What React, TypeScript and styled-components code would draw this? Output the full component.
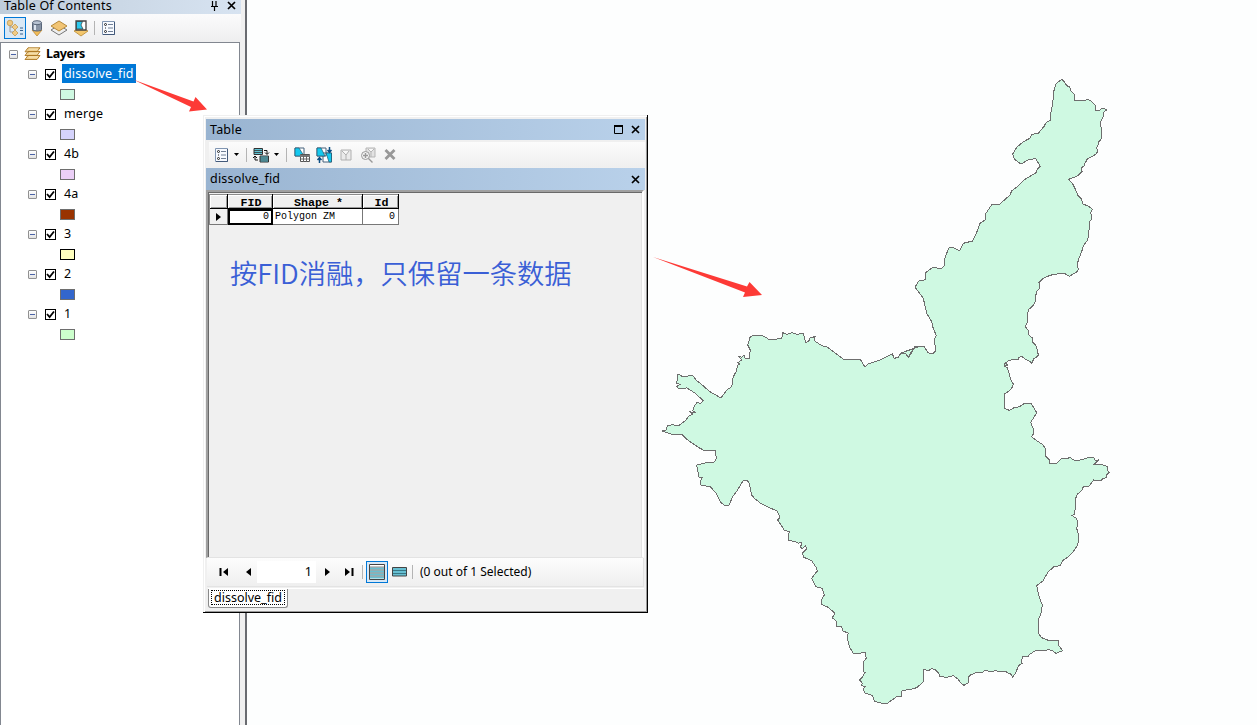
import React from 'react';
import styled, { createGlobalStyle } from 'styled-components';

const Global = createGlobalStyle`
  *, *::before, *::after { box-sizing: border-box; }
  body { margin: 0; background: #fdfefe; overflow: hidden; }
`;

const Desktop = styled.div`
  position: relative;
  display: flex;
  width: 1257px;
  height: 725px;
  overflow: hidden;
  background: #fdfefe;
  color: #000;
  font: 12.5px/20px "Noto Sans", "Noto Sans CJK SC", sans-serif;
`;

/* ---------- Table of contents ---------- */
const Toc = styled.aside`
  display: flex;
  flex-direction: column;
  width: 247px;
  height: 725px;
  background: #f0f0f0;
  border-right: 2px solid #696b70;
`;
const TocTitle = styled.header`
  display: flex;
  align-items: center;
  height: 14px;
  width: 241px;
  padding: 0 5px 3px 4px;
  background: linear-gradient(90deg, #bfcddb, #d7e3f1);
  line-height: 12px;
`;
const TocName = styled.span`
  flex: 1;
  letter-spacing: 0.2px;
  white-space: nowrap;
`;
const TitleIcons = styled.span`
  display: flex;
  align-items: center;
  gap: 8px;
`;
const TocTools = styled.div`
  display: flex;
  align-items: center;
  height: 28px;
  width: 241px;
  padding-left: 4px;
  background: linear-gradient(#fbfbfc, #eeeeef);
`;
const ToolSlot = styled.span<{ $on?: boolean; $w?: number }>`
  display: flex;
  align-items: center;
  justify-content: center;
  width: ${p => p.$w ?? 22}px;
  height: 22px;
  border: 1px solid ${p => (p.$on ? '#0078d7' : 'transparent')};
  background: ${p => (p.$on ? '#d9e8f5' : 'transparent')};
`;
const Divider = styled.span<{ $m?: string }>`
  width: 1px;
  height: 14px;
  margin: ${p => p.$m ?? '0 4px'};
  background: #b4b4b4;
`;
const Tree = styled.div`
  flex: 1;
  width: 240px;
  border: solid #828790;
  border-width: 1px 1px 0 1px;
  background: #fff;
  padding-top: 1px;
`;
const TreeRow = styled.div<{ $indent: number }>`
  display: flex;
  align-items: center;
  height: 20px;
  padding-left: ${p => p.$indent}px;
`;
const Expander = styled.span`
  display: flex;
  align-items: center;
  justify-content: center;
  width: 9px;
  height: 9px;
  border: 1px solid #919191;
  border-radius: 1px;
  background: linear-gradient(#fff, #e2e2e2);
  &::after { content: ''; width: 5px; height: 1px; background: #4b63a7; }
`;
const Check = styled.span`
  display: flex;
  width: 11px;
  height: 11px;
  margin: 1px 6px 0 8px;
  border: 1px solid #000;
`;
const Label = styled.span<{ $selected?: boolean }>`
  height: 19px;
  margin-top: -2px;
  padding: 0 2px;
  line-height: 19px;
  letter-spacing: 0.15px;
  color: ${p => (p.$selected ? '#fff' : '#000')};
  background: ${p => (p.$selected ? '#0078d7' : 'transparent')};
`;
const RootLabel = styled.b`
  margin-left: 5px;
  font-size: 12.5px;
  letter-spacing: -0.35px;
`;
const Swatch = styled.span<{ $fill: string; $line?: string }>`
  width: 15px;
  height: 11px;
  margin-top: 1px;
  border: 1px solid ${p => p.$line ?? '#6e6e6e'};
  background: ${p => p.$fill};
`;

/* ---------- Floating table window ---------- */
const Window = styled.section`
  position: absolute;
  left: 203px;
  top: 115px;
  display: flex;
  flex-direction: column;
  width: 445px;
  height: 498px;
  padding: 2px 1px 0 2px;
  border: solid #000;
  border-width: 0 1px 1px 0;
  background: #f0f0f0;
  box-shadow: inset 1px 1px #f0f0f0, inset 2px 2px #fff, inset -1px -1px #9a9a9a;
`;
const Bar = styled.header<{ $h: number; $mt?: number }>`
  display: flex;
  align-items: center;
  height: ${p => p.$h}px;
  margin: ${p => p.$mt ?? 0}px 1px 0 1px;
  padding: 0 5px 0 4px;
  background: linear-gradient(90deg, #99b4d1, #b9d1ea);
`;
const BarName = styled.span`
  flex: 1;
  letter-spacing: 0.2px;
`;
const TableTools = styled.div`
  display: flex;
  align-items: center;
  height: 25px;
  margin: 2px 1px 1px 4px;
  padding-left: 4px;
  background: linear-gradient(#fcfcfc, #efefef);
`;
const Grid = styled.div`
  height: 368px;
  margin: 0 2px 0 1px;
  padding: 2px 0 0 1px;
  border: solid;
  border-width: 2px 2px 1px 2px;
  border-color: #a0a0a0 #fff #e3e3e3 #a0a0a0;
  box-shadow: inset 1px 1px #696969, inset -1px 0 #e3e3e3;
  background: #f0f0f0;
`;
const Sheet = styled.div`
  display: grid;
  grid-template-columns: 18px 45px 90px 36px;
  grid-template-rows: 15px 16px;
  width: 190px;
  border-left: 1px solid #8a8a8a;
  font-family: "Liberation Mono", "Noto Sans CJK SC", monospace;
`;
const HeadCell = styled.div`
  display: flex;
  align-items: center;
  justify-content: center;
  padding: 3px 0 0 2px;
  border: solid #000;
  border-width: 0 1px 1px 0;
  box-shadow: inset 0 1px #8a8a8a, inset 1px 2px #fff, inset -1px -1px #9a9a9a;
  background: #f0f0f0;
  font-weight: 700;
  font-size: 11.67px;
  line-height: 12px;
`;
const Cell = styled.div<{ $right?: boolean; $active?: boolean; $head?: boolean }>`
  display: flex;
  align-items: center;
  justify-content: ${p => (p.$head ? 'center' : p.$right ? 'flex-end' : 'flex-start')};
  padding: ${p => (p.$active ? '0 2px 0 0' : '0 3px 0 2px')};
  border: solid #777;
  border-width: 0 1px 1px 0;
  ${p => p.$active && 'border: 2px solid #000;'}
  background: ${p => (p.$head ? '#f0f0f0' : '#fff')};
  font-size: 10px;
  line-height: 12px;
`;
const Note = styled.p`
  margin: 27px 0 0 21px;
  font: 27.3px/40px "Noto Sans CJK SC", sans-serif;
  color: #3a5fd6;
  white-space: nowrap;
  font-weight: 350;
`;
const Nav = styled.footer`
  display: flex;
  align-items: center;
  height: 29px;
  margin: 0 2px 0 2px;
  border-right: 1px solid #e3e3e3;
  border-bottom: 1px solid #e3e3e3;
  background: linear-gradient(#fdfdfd, #efefef);
`;
const NavButton = styled.span<{ $w: number }>`
  display: flex;
  justify-content: center;
  width: ${p => p.$w}px;
`;
const RecordBox = styled.span`
  width: 59px;
  height: 22px;
  padding-right: 4px;
  background: #fff;
  text-align: right;
  line-height: 21px;
`;
const Status = styled.span`
  white-space: nowrap;
  font-size: 12px;
`;
const Tabs = styled.div`
  display: flex;
  margin: 1px 2px 0 3px;
  border-top: 1px solid #fff;
`;
const Tab = styled.span`
  display: flex;
  width: 80px;
  height: 19px;
  padding: 1px 2px 2px 2px;
  border: 1px solid #8a8a8a;
  border-top: 0;
  border-radius: 0 0 3px 3px;
  background: #fff;
`;
const TabFocus = styled.span`
  flex: 1;
  border: 1px dotted #000;
  padding-left: 2px;
  line-height: 13px;
  white-space: nowrap;
  overflow: hidden;
`;

/* ---------- Map ---------- */
const MapView = styled.main`
  flex: 1;
  display: flex;
  background: #fdfefe;
`;
const Annotations = styled.svg`
  position: absolute;
  left: 0;
  top: 0;
  pointer-events: none;
`;

/* Outline sections: local origin, then vertices in thirds of a pixel. */
const outline: [number, number, string][] = [
  [900, 70, '485,28 495,38 500,47 508,50 513,62 523,73 524,91 555,91 562,88 572,93 580,100 587,107 587,121 600,120 606,115 616,117 620,121 612,125 609,140 602,155 601,165 604,175 603,208 596,215 594,225 590,232 593,245 587,253 575,260 562,267 555,280 552,288 545,293 546,304 532,318 520,323 506,327 520,345 528,362 533,375 545,388 548,402 565,408 577,418 572,428 576,445 569,455 567,480 563,510 550,528 545,545 537,565 531,585 535,597 533,604 508,619 495,611 475,611 450,616 428,626 417,638 418,656 409,665 406,695 400,706 387,718 382,732 383,755 376,770 385,782 387,795 396,803 396,814 408,827 412,840 412,849 417,853 409,862 401,866 396,880 388,873 377,868 365,859 357,862 354,870 340,868 325,873 314,880 314,890 322,886 319,878'],
  [980, 340, '74,70 76,80 82,82 86,97 92,118 100,132 97,142 88,153 73,162 73,205 88,211 102,203 118,200 132,191 154,190 162,205 170,218 160,235 152,247 157,260 162,268 160,283 154,290 170,302 187,313 196,325 198,350 207,358 207,371 228,372 242,357 265,355 268,351 281,360 300,360 325,353 341,353 347,362 355,360 350,366 342,373 370,375 381,379 384,393 388,397 380,405 378,413 368,416 363,423 341,420 334,430 327,438 310,440 306,450 292,463 285,480 288,500 284,512 284,524 276,526 290,536 294,550 290,565 294,580 297,590 293,615 280,635 265,651 250,660 240,677 222,680 205,695 195,712 190,722 170,737 175,760 181,780 187,795 183,820 177,835 175,880 185,893 205,901 235,903 237,918 248,932 228,940 215,931 205,929 195,931 170,930 150,942 143,950 130,948 125,958 126,970 115,978 108,997 98,1011'],
  [740, 480, '812,582 800,578 797,573 775,575 767,571 755,576 735,571 728,577 712,577 692,584 684,592 684,609 672,616 660,607 655,598 640,587 622,592 600,590 596,580 585,568 575,566 565,572 551,568 550,606 530,623 515,627 500,629 486,633 484,649 470,650 443,669 425,670 404,664 397,647 385,642 375,640 370,628 375,620 364,616 367,610 359,600 367,592 375,578 370,575 370,565 371,545 379,535 376,518 365,517 360,522 340,520 330,503 325,488 321,470 325,459 308,453 305,440 288,438 290,425 277,413 285,400 265,382 243,373 243,362 253,345 247,325 228,320 215,295 232,273 228,262 215,242 190,231 188,218 199,208 197,196 188,205 181,203 186,187 175,190 165,184 147,182 144,170 148,155 133,151 125,138 113,120 120,113 112,93 85,82 62,70 43,55 35,45 28,10 22,1'],
  [650, 240, '280,721 262,751 247,772 237,796 225,797 212,787 200,762 182,741 153,735 152,722 157,712 147,711 140,675 168,668 193,666 199,655 196,632 165,633 145,622 110,598 98,585 65,583 37,573 48,571 52,558 68,554 85,558 105,543 117,528 128,522 122,516 137,518 128,513 132,500 140,488 153,490 160,482 135,459 110,444 85,445 80,440 90,433 80,430 84,402 98,410 128,406 140,423 145,425 180,455 213,474 230,450 245,440 250,410 258,395 263,375 270,372 264,368 275,360 265,348 275,352 282,345 285,354 298,355 301,330 293,315 300,292 310,285 340,288 360,300 395,295 398,278 410,283 425,278 440,283 460,280 467,308 477,302 480,293 495,290 493,302 515,317 530,320 580,357 632,360 645,382 655,372 685,362 727,342 733,355 745,352 752,340 765,340 777,352 787,333 797,320 807,320'],
  [900, 70, '0,850 15,849 26,862 32,848 45,829 72,829 85,849 100,850 106,843 104,805 109,797 98,770 95,755 80,730 70,685 45,652 57,632 77,629 75,610 97,593 125,595 133,588 133,570 140,550 148,532 160,533 175,541 180,541 190,520 218,513 230,487 240,460 255,450 258,430 275,404 300,402 330,375 335,362 355,348 375,328 408,308 412,297 421,289 407,266 385,269 363,282 343,267 338,252 350,232 370,215 390,205 395,193 415,190 433,168 437,159 452,150 452,130 458,100 461,65 467,42'],
];
const boundary = outline
  .flatMap(([ox, oy, pts]) =>
    pts.split(' ').map(p => {
      const [x, y] = p.split(',').map(Number);
      return `${(ox + x / 3).toFixed(1)},${(oy + y / 3).toFixed(1)}`;
    })
  )
  .join(' ');

const CloseX = () => (
  <svg width="9" height="9" viewBox="0 0 9 9"><path d="M1 1l7 7M8 1L1 8" stroke="#000" strokeWidth="1.7" /></svg>
);
const Pin = () => (
  <svg width="9" height="10" viewBox="0 0 9 10"><path d="M2.5 0v5M1 5.5h7M6 0v5M4.5 6v4" stroke="#000" strokeWidth="1.2" fill="none" /></svg>
);
const Maximize = () => (
  <svg width="9" height="9" viewBox="0 0 9 9"><path d="M.5 1v7.5h8V1M0 1h9" stroke="#000" fill="none" /><path d="M0 0h9v2H0z" /></svg>
);
const Caret = () => (
  <svg width="5" height="3" viewBox="0 0 5 3"><path d="M0 0h5L2.5 3z" /></svg>
);
const Options = () => (
  <svg width="13" height="14" viewBox="0 0 13 14">
    <path d="M.5.5h12v13H.5z" fill="#f7faff" stroke="#8196b2" />
    <path d="M12.5 1v12.5H1" stroke="#42597a" fill="none" />
    <g fill="none" stroke="#222"><circle cx="3.5" cy="3.5" r="1" /><circle cx="3.5" cy="10.5" r="1" /></g>
    <path d="M3 7h1" stroke="#222" /><path d="M6 3.5h5M6 7h5M6 10.5h5" stroke="#718096" />
  </svg>
);
const Diamond = ({ y = 0 }: { y?: number }) => (
  <path d={`M8 ${5 + y}l7 4-7 5-7-5z`} fill="#f3c66c" stroke="#b78932" strokeWidth=".8" />
);
const DrawingOrder = () => (
  <svg width="18" height="18" viewBox="0 0 18 18">
    <path d="M4 5v8h5M4 8h5" stroke="#999" fill="none" />
    <circle cx="4" cy="4" r="2.8" fill="#eec77f" stroke="#c39b51" strokeWidth=".8" />
    <path d="M9 5l3 3-3 3-3-3zM9 11l3 3-3 3-3-3z" fill="#f0cc87" stroke="#c59b50" strokeWidth=".8" />
    <path d="M14 9h3M14 11.5h3M14 15h3" stroke="#38618d" strokeWidth="1.2" />
  </svg>
);
const Source = () => (
  <svg width="16" height="17" viewBox="0 0 16 17">
    <path d="M3 10l5-2 5 2-5 6z" fill="#f3bd58" stroke="#b17e2a" strokeWidth=".7" />
    <path d="M3.5 2.5v7c0 2 9 2 9 0v-7" fill="#8793a5" stroke="#586579" />
    <path d="M5 4v6h2V4z" fill="#dce4ef" />
    <ellipse cx="8" cy="2.7" rx="4.5" ry="2" fill="#b8c3d3" stroke="#586579" />
  </svg>
);
const Visibility = () => (
  <svg width="18" height="16" viewBox="0 0 18 16">
    <path d="M9 5l8 5-8 5-8-5z" fill="#eee" stroke="#777" />
    <path d="M9 1l8 5-8 5-8-5z" fill="#f1c474" stroke="#b78a3b" />
  </svg>
);
const Selection = () => (
  <svg width="16" height="17" viewBox="0 0 16 17">
    <Diamond y={2} />
    <path d="M3 1h10v9H3z" fill="#fff" stroke="#444" strokeWidth="1.3" />
    <path d="M3.5 1.5h6L8 5l2 4H3.5z" fill="#2dc9ed" stroke="#333" strokeWidth=".7" />
  </svg>
);
const LayersIcon = () => (
  <svg width="17" height="14" viewBox="0 0 17 14">
    <path d="M4 8.5h12l-3 4H1zM4 4.5h12l-3 4H1zM4 .8h12l-3 4H1z" fill="#efd091" stroke="#ad7721" strokeWidth=".9" />
    <path d="M5 2h9M5 6h9M5 10h9" stroke="#fff0c9" strokeWidth=".8" />
  </svg>
);
const Tick = () => (
  <svg width="9" height="9" viewBox="0 0 9 9"><path d="M1 4l2.6 3L8 1.5" stroke="#000" strokeWidth="1.8" fill="none" /></svg>
);
const Related = () => (
  <svg width="17" height="16" viewBox="0 0 17 16">
    <path d="M1 1.5h8.5v6H1zM7 9h8.5v6H7z" fill="#5fc2d3" stroke="#333" />
    <path d="M1 3.5h8.5M1 5.5h8.5M7 11h8.5M7 13h8.5" stroke="#333" strokeWidth=".8" />
    <path d="M11 3.5h3V7M12 5.5l2 2 2-2M5 13H2V9M0 11l2-2 2 2" stroke="#111" fill="none" />
  </svg>
);
const SelectByAttr = () => (
  <svg width="17" height="16" viewBox="0 0 17 16">
    <path d="M1 1h9v8H1z" fill="#fff" stroke="#45617b" />
    <path d="M1 1h4l5 8H1z" fill="#14c8ef" stroke="#22556c" strokeWidth=".7" />
    <path d="M6.5 7.5h9v7h-9z" fill="#fff" stroke="#555" /><path d="M6 8h10v2H6z" fill="#777" />
    <path d="M6.5 12h9M9.5 9v6M12.5 9v6" stroke="#666" />
  </svg>
);
const Switch = () => (
  <svg width="17" height="16" viewBox="0 0 17 16">
    <path d="M1 1h9v8H1zM7 6h8.5v9H7z" fill="#fff" stroke="#45617b" />
    <path d="M1 1h4l4 8H1zM10 6h5.5v9H13z" fill="#14c8ef" stroke="#22556c" strokeWidth=".7" />
    <path d="M13.5 0v5M11.5 3l2 2.3 2-2.3M3.5 16v-5M1.5 13l2-2.3 2 2.3" stroke="#0b4d83" strokeWidth="1.5" fill="none" />
  </svg>
);
const ClearSel = () => (
  <svg width="12" height="12" viewBox="0 0 12 12"><path d="M1 1h10v10H1zM2 2l4 4 3-4M6 6v5" fill="#eaeaea" stroke="#b0b0b0" /></svg>
);
const ZoomSel = () => (
  <svg width="16" height="16" viewBox="0 0 16 16">
    <path d="M6 1h9v9H6zM8 2l3 3 3-3M11 5v5" fill="#e2e2e2" stroke="#b5b5b5" />
    <circle cx="5.5" cy="8.5" r="4" fill="#f3f3f3" stroke="#999" /><path d="M3 8.5h5M5.5 6v5M8.5 11.5l4 4" stroke="#999" strokeWidth="1.4" />
  </svg>
);
const DeleteX = () => (
  <svg width="12" height="11" viewBox="0 0 12 11"><path d="M1.5 1l9 9M10.5 1l-9 9" stroke="#989898" strokeWidth="2.8" /></svg>
);
const AllRecords = () => (
  <svg width="16" height="16" viewBox="0 0 16 16">
    <path d="M.5.5h15v15H.5z" fill="#fff" stroke="#444" />
    <path d="M1 4.5h14M1 7.5h14M1 10.5h14M1 13.5h14" stroke="#69bfd0" strokeWidth="2" />
    <path d="M1 3h14M1 6h14M1 9h14M1 12h14" stroke="#555" strokeWidth=".7" />
  </svg>
);
const SelectedRecords = () => (
  <svg width="15" height="10" viewBox="0 0 15 10">
    <path d="M.5.5h14v8.5H.5z" fill="#66bfd2" stroke="#444" /><path d="M1 3.5h13M1 6.5h13" stroke="#377785" />
  </svg>
);
const Arrow = ({ back, bar }: { back?: boolean; bar?: boolean }) => (
  <svg width="9" height="8" viewBox="0 0 9 8">
    <g transform={back ? 'translate(9 0) scale(-1 1)' : undefined}>
      <path d={bar ? 'M0 0l5 4-5 4z' : 'M2 0l5 4-5 4z'} />
      {bar && <path d="M6.5 0h2v8h-2z" />}
    </g>
  </svg>
);

const layers = [
  { name: 'dissolve_fid', fill: '#cff9e2', selected: true },
  { name: 'merge', fill: '#d5d3fc' },
  { name: '4b', fill: '#ebcff7' },
  { name: '4a', fill: '#993300' },
  { name: '3', fill: '#ffffbe', line: '#000' },
  { name: '2', fill: '#3366cc' },
  { name: '1', fill: '#ccffcc' },
];

export default function App() {
  return (
    <Desktop>
      <Global />
      <Toc>
        <TocTitle>
          <TocName>Table Of Contents</TocName>
          <TitleIcons><Pin /><CloseX /></TitleIcons>
        </TocTitle>
        <TocTools>
          <ToolSlot $on><DrawingOrder /></ToolSlot>
          <ToolSlot><Source /></ToolSlot>
          <ToolSlot><Visibility /></ToolSlot>
          <ToolSlot><Selection /></ToolSlot>
          <Divider $m="0 2px 0 2px" />
          <ToolSlot><Options /></ToolSlot>
        </TocTools>
        <Tree>
          <TreeRow $indent={8}>
            <Expander />
            <svg width="6" height="1" />
            <LayersIcon />
            <RootLabel>Layers</RootLabel>
          </TreeRow>
          {layers.map(l => (
            <React.Fragment key={l.name}>
              <TreeRow $indent={27}>
                <Expander />
                <Check><Tick /></Check>
                <Label $selected={l.selected}>{l.name}</Label>
              </TreeRow>
              <TreeRow $indent={59}>
                <Swatch $fill={l.fill} $line={l.line} />
              </TreeRow>
            </React.Fragment>
          ))}
        </Tree>
      </Toc>
      <MapView>
        <svg width="1010" height="725" viewBox="247 0 1010 725">
          <polygon points={boundary} fill="#cff9e2" stroke="#6e6e6e" strokeWidth="1" shapeRendering="crispEdges" />
        </svg>
      </MapView>
      <Window>
        <Bar $h={21} $mt={2}>
          <BarName>Table</BarName>
          <TitleIcons><Maximize /><CloseX /></TitleIcons>
        </Bar>
        <TableTools>
          <ToolSlot $w={17}><Options /></ToolSlot>
          <ToolSlot $w={13}><Caret /></ToolSlot>
          <Divider $m="0 5px 0 3px" />
          <ToolSlot $w={19}><Related /></ToolSlot>
          <ToolSlot $w={11}><Caret /></ToolSlot>
          <Divider $m="0 4px" />
          <ToolSlot><SelectByAttr /></ToolSlot>
          <ToolSlot><Switch /></ToolSlot>
          <ToolSlot><ClearSel /></ToolSlot>
          <ToolSlot><ZoomSel /></ToolSlot>
          <ToolSlot><DeleteX /></ToolSlot>
        </TableTools>
        <Bar $h={22}>
          <BarName>dissolve_fid</BarName>
          <CloseX />
        </Bar>
        <Grid>
          <Sheet>
            <HeadCell />
            <HeadCell>FID</HeadCell>
            <HeadCell>Shape *</HeadCell>
            <HeadCell>Id</HeadCell>
            <Cell $head><Arrow /></Cell>
            <Cell $right $active>0</Cell>
            <Cell>Polygon ZM</Cell>
            <Cell $right>0</Cell>
          </Sheet>
          <Note>按FID消融，只保留一条数据</Note>
        </Grid>
        <Nav>
          <NavButton $w={32}><Arrow back bar /></NavButton>
          <NavButton $w={18}><Arrow back /></NavButton>
          <RecordBox>1</RecordBox>
          <NavButton $w={22}><Arrow /></NavButton>
          <NavButton $w={22}><Arrow bar /></NavButton>
          <Divider $m="0 3px 0 2px" />
          <ToolSlot $on><AllRecords /></ToolSlot>
          <ToolSlot><SelectedRecords /></ToolSlot>
          <Divider $m="0 7px 0 2px" />
          <Status>(0 out of 1 Selected)</Status>
        </Nav>
        <Tabs>
          <Tab><TabFocus>dissolve_fid</TabFocus></Tab>
        </Tabs>
      </Window>
      <Annotations width="1257" height="725">
        <g fill="#fd3a36">
          <path d="M133 79.5L193.5 101.5 195.5 97 207 109.5 189 111.5 191 107z" />
          <path d="M653 257L747 286.5 749.5 282 762 295 743 297 745 292.5z" />
        </g>
      </Annotations>
    </Desktop>
  );
}
